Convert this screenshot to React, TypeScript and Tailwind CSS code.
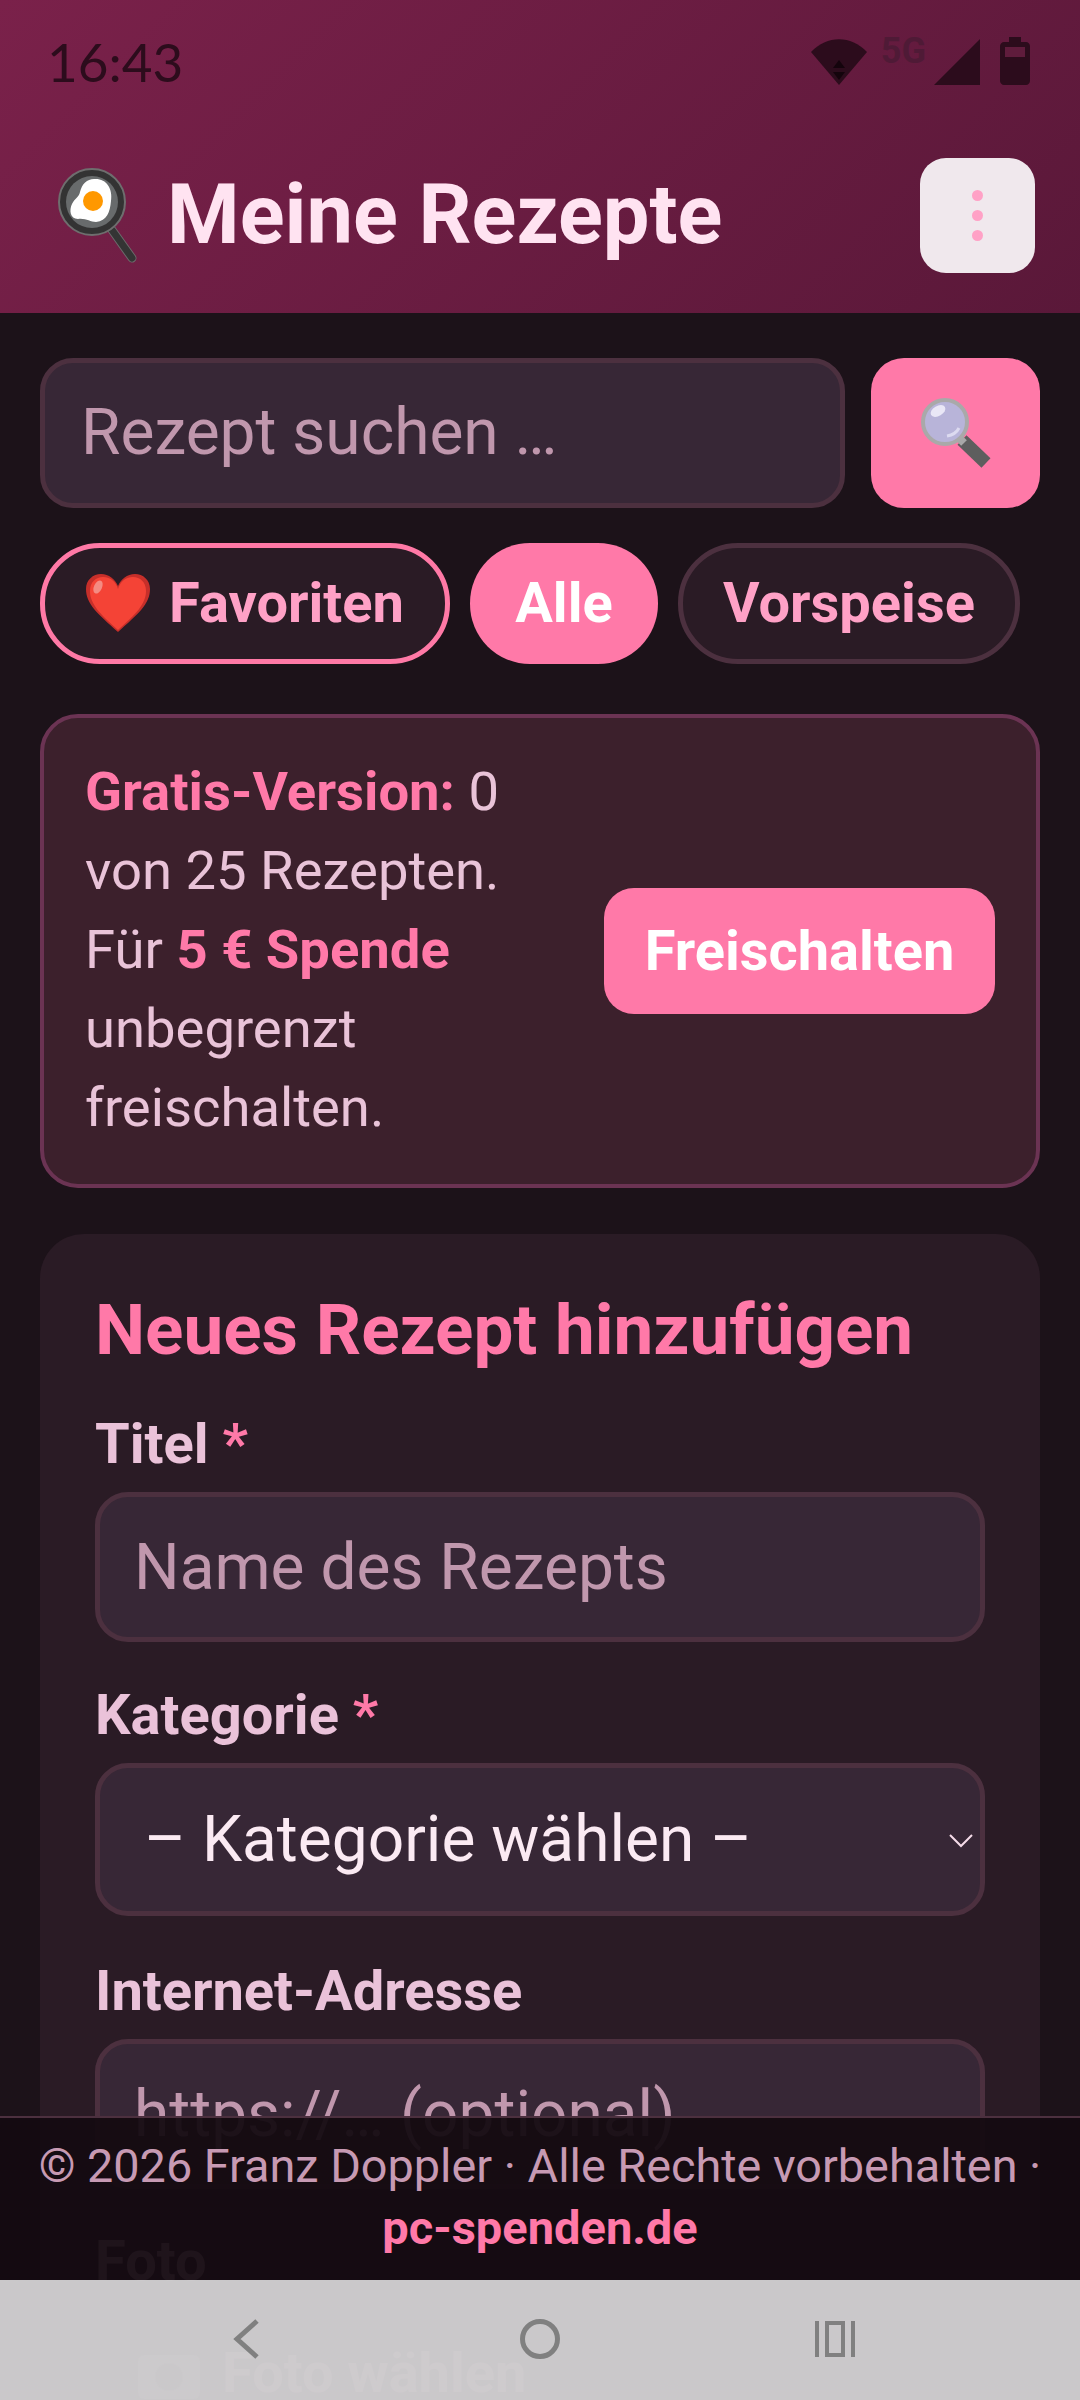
import { ReactElement } from 'react';

const fieldClass =
  'w-full h-[150px] rounded-[33px] border-[5px] border-[#4c303f] bg-[#372736] px-[34px] text-[64px] text-[#fbeaf3] outline-none placeholder:text-[#c097ad]';

const labelClass = 'block text-[56px] font-bold leading-[64px] text-[#eac2d9]';

const PanIcon = (): ReactElement => (
  <svg width="80" height="96" viewBox="0 0 80 96">
    <path d="M54 62 L74 90" stroke="#6b6b6b" strokeWidth="9" strokeLinecap="round" />
    <path d="M54 62 L74 90" stroke="#343434" strokeWidth="7" strokeLinecap="round" />
    <circle cx="34" cy="34" r="33" fill="#333" stroke="#6e6e6e" strokeWidth="2" />
    <circle cx="34" cy="34" r="26" fill="#686b6c" />
    <path
      d="M36 11 C48 10 55 20 53 33 C52 44 49 53 38 54 C32 54 28 50 20 51 C12 51 11 42 14 36 C17 30 21 29 22 24 C24 16 29 11 36 11 Z"
      fill="#fff"
    />
    <circle cx="35" cy="33" r="10" fill="#ff9800" />
  </svg>
);

const SearchEmoji = (): ReactElement => (
  <svg width="72" height="72" viewBox="0 0 72 72">
    <path d="M42 43 L66 66" stroke="#5e5e5e" strokeWidth="13" />
    <path d="M38 40 L44 46" stroke="#a8a8a8" strokeWidth="8" />
    <circle cx="25" cy="25" r="22" fill="#b8b4d9" stroke="#a9a9a9" strokeWidth="4" />
    <ellipse cx="18" cy="14" rx="8" ry="5" fill="#e9e7f6" transform="rotate(-30 18 14)" />
    <path d="M27 39 C33 38 37 35 39 31" stroke="#dcdaf0" strokeWidth="3" fill="none" />
  </svg>
);

const HeartEmoji = (): ReactElement => (
  <svg width="64" height="58" viewBox="0 0 64 58">
    <path
      d="M32 58 C12 40 0 30 0 15 C0 6 7 0 15 0 C23 0 29 5 32 12 C35 5 41 0 49 0 C57 0 64 6 64 15 C64 30 52 40 32 58 Z"
      fill="#c62f2a"
    />
    <path
      d="M32 56 C14 40 4 30 4 17 C4 8 10 3 17 3 C25 3 30 8 32 15 C34 8 39 3 47 3 C54 3 60 8 60 17 C60 30 50 40 32 56 Z"
      fill="#f44336"
    />
    <ellipse cx="12" cy="13" rx="4" ry="7" fill="#f48b82" transform="rotate(25 12 13)" />
  </svg>
);

const StatusIcons = (): ReactElement => (
  <div className="flex items-end gap-[14px]">
    <svg width="56" height="46" viewBox="0 0 56 46">
      <path d="M28 46 L0 13 C16 -4 40 -4 56 13 Z" fill="#2c0c1c" />
      <path d="M28 21 L34 29 H22 Z M22 33 H34 L28 41 Z" fill="#14040c" />
    </svg>
    <span className="-mr-[6px] -mt-[4px] self-start text-[36px] font-bold leading-[36px] text-[#4f1a36]">5G</span>
    <svg width="46" height="46" viewBox="0 0 46 46">
      <path d="M46 0 V46 H0 Z" fill="#2c0c1c" />
    </svg>
    <svg width="30" height="48" viewBox="0 0 30 48" className="ml-[6px]">
      <path
        d="M9 0 H21 V5 H26 C28 5 30 7 30 9 V44 C30 46 28 48 26 48 H4 C2 48 0 46 0 44 V9 C0 7 2 5 4 5 H9 Z"
        fill="#2c0c1c"
      />
      <rect x="5" y="10" width="20" height="10" fill="#5f1c3c" />
    </svg>
  </div>
);

const Header = (): ReactElement => (
  <header className="h-[313px] bg-[linear-gradient(135deg,#7a214a,#5a1839)] pl-[58px] pr-[45px]">
    <div className="-ml-[11px] flex h-[122px] items-center justify-between pr-[5px]">
      <span className="font-['Lato'] text-[53px] leading-none text-[#2c0c1c]">16:43</span>
      <StatusIcons />
    </div>
    <div className="mt-[36px] flex items-center justify-between">
      <div className="flex items-center gap-[29px]">
        <PanIcon />
        <h1 className="pb-[2px] text-[83px] font-bold leading-[90px] text-[#ffe3f1]">Meine Rezepte</h1>
      </div>
      <button className="flex h-[115px] w-[115px] flex-col items-center justify-center gap-[9px] rounded-[26px] bg-[#f0e8ed]">
        <span className="h-[11px] w-[11px] rounded-full bg-[#ffa1c6]" />
        <span className="h-[11px] w-[11px] rounded-full bg-[#ffa1c6]" />
        <span className="h-[11px] w-[11px] rounded-full bg-[#ffa1c6]" />
      </button>
    </div>
  </header>
);

const Chips = (): ReactElement => (
  <div className="mt-[35px] flex gap-[20px]">
    <button className="flex h-[121px] w-[410px] items-center justify-center gap-[19px] rounded-[60px] border-[5px] border-[#ff79a6] bg-[#2a1b25] pb-[2px] text-[56px] font-bold text-[#ffa1c6]">
      <HeartEmoji />
      Favoriten
    </button>
    <button className="h-[121px] w-[188px] rounded-[60px] bg-[#ff79a8] pb-[2px] text-[56px] font-bold text-white">
      Alle
    </button>
    <button className="h-[121px] w-[342px] rounded-[60px] border-[5px] border-[#4c303f] bg-[#2a1b25] pb-[2px] text-[56px] font-bold text-[#ffa1c6]">
      Vorspeise
    </button>
  </div>
);

const Notice = (): ReactElement => (
  <div className="mt-[50px] flex h-[474px] items-center justify-between rounded-[38px] border-[4px] border-[#6b3353] bg-[#3c202c] pl-[41px] pr-[41px]">
    <p className="w-[430px] pb-[4px] text-[54.4px] leading-[79px] text-[#e9c3d8]">
      <strong className="font-bold text-[#ff79a8]">Gratis-Version:</strong> 0 von 25 Rezepten. Für{' '}
      <strong className="font-bold text-[#ff79a8]">5 € Spende</strong> unbegrenzt freischalten.
    </p>
    <button className="h-[126px] w-[391px] rounded-[30px] bg-[#ff79a8] text-[56px] font-bold text-white">
      Freischalten
    </button>
  </div>
);

const RecipeForm = (): ReactElement => (
  <section className="mt-[46px] rounded-[44px] bg-[#2a1b25] px-[55px] pt-[58px]">
    <h2 className="text-[71px] font-bold leading-[76px] text-[#ff79a8]">Neues Rezept hinzufügen</h2>
    <label className={`${labelClass} mt-[44px]`}>
      Titel <span className="text-[#ff79a8]">*</span>
    </label>
    <input className={`${fieldClass} mt-[16px]`} placeholder="Name des Rezepts" />
    <label className={`${labelClass} mt-[41px]`}>
      Kategorie <span className="text-[#ff79a8]">*</span>
    </label>
    <div className="relative mt-[16px]">
      <select className={`${fieldClass} !h-[153px] appearance-none !pl-[44px]`}>
        <option>– Kategorie wählen –</option>
      </select>
      <svg width="24" height="14" viewBox="0 0 24 14" className="absolute right-[12px] top-[71px]">
        <path d="M1 1 L12 12 L23 1" stroke="#f5dbe9" strokeWidth="2" fill="none" />
      </svg>
    </div>
    <label className={`${labelClass} mt-[43px]`}>Internet-Adresse</label>
    <input className={`${fieldClass} mt-[16px]`} placeholder="https://… (optional)" />
    <label className={`${labelClass} mt-[40px]`}>Foto</label>
    <div className="mt-[38px] flex items-center gap-[22px] pl-[43px] text-[56px] font-bold text-[#ffa1c6]">
      <svg width="62" height="52" viewBox="0 0 62 52">
        <rect x="0" y="8" width="62" height="44" rx="6" fill="#6b6b6b" />
        <circle cx="31" cy="30" r="14" fill="#333" />
      </svg>
      Foto wählen
    </div>
  </section>
);

const Footer = (): ReactElement => (
  <footer className="absolute inset-x-0 top-[2116px] h-[164px] border-t-[2px] border-[#4c303f] bg-[#140b11]/95 pt-[18px] text-center text-[47px] leading-[61px] text-[#c79ab3]">
    <p className="text-[46.8px]">© 2026 Franz Doppler · Alle Rechte vorbehalten ·</p>
    <a className="font-bold text-[#ff79a8]">pc-spenden.de</a>
  </footer>
);

const NavBar = (): ReactElement => (
  <nav className="absolute inset-x-0 bottom-0 flex h-[120px] items-center justify-center gap-[255px] bg-[#cdcbcd]/[0.985] pb-[2px]">
    <svg width="40" height="40" viewBox="0 0 40 40">
      <path d="M32 2 L12 20 L32 38" stroke="#808080" strokeWidth="5" fill="none" />
    </svg>
    <svg width="40" height="40" viewBox="0 0 40 40">
      <circle cx="20" cy="20" r="17.5" stroke="#808080" strokeWidth="5" fill="none" />
    </svg>
    <svg width="40" height="36" viewBox="0 0 40 36">
      <path d="M2 0 V36 M38 0 V36" stroke="#808080" strokeWidth="4" />
      <rect x="12" y="2" width="16" height="32" stroke="#808080" strokeWidth="4" fill="none" />
    </svg>
  </nav>
);

const App = (): ReactElement => {
  return (
    <div className="relative h-[2400px] w-[1080px] overflow-hidden bg-[#1c1219] font-['Roboto',sans-serif]">
      <Header />
      <main className="px-[40px] pt-[45px]">
        <div className="flex gap-[26px]">
          <input className={`${fieldClass} flex-1 !pl-[36px] pb-[1px]`} placeholder="Rezept suchen …" />
          <button className="flex h-[150px] w-[169px] shrink-0 items-center justify-center rounded-[33px] bg-[#ff79a8]">
            <SearchEmoji />
          </button>
        </div>
        <Chips />
        <Notice />
        <RecipeForm />
      </main>
      <Footer />
      <NavBar />
    </div>
  );
};

export default App;
